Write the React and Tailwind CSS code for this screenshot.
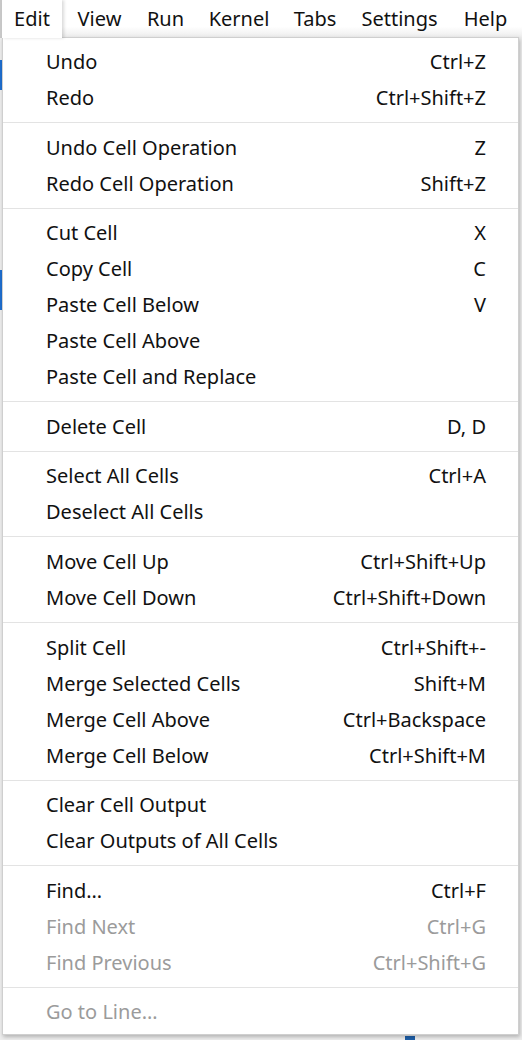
import React from "react";

const F = { fontFamily: "'Noto Sans', 'Open Sans', sans-serif" };

const groups = [
  [["Undo", "Ctrl+Z"], ["Redo", "Ctrl+Shift+Z"]],
  [["Undo Cell Operation", "Z"], ["Redo Cell Operation", "Shift+Z"]],
  [["Cut Cell", "X"], ["Copy Cell", "C"], ["Paste Cell Below", "V"], ["Paste Cell Above", ""], ["Paste Cell and Replace", ""]],
  [["Delete Cell", "D, D"]],
  [["Select All Cells", "Ctrl+A"], ["Deselect All Cells", ""]],
  [["Move Cell Up", "Ctrl+Shift+Up"], ["Move Cell Down", "Ctrl+Shift+Down"]],
  [["Split Cell", "Ctrl+Shift+-"], ["Merge Selected Cells", "Shift+M"], ["Merge Cell Above", "Ctrl+Backspace"], ["Merge Cell Below", "Ctrl+Shift+M"]],
  [["Clear Cell Output", ""], ["Clear Outputs of All Cells", ""]],
  [["Find…", "Ctrl+F"], ["Find Next", "Ctrl+G", true], ["Find Previous", "Ctrl+Shift+G", true]],
  [["Go to Line…", "", true]],
];

export default function App() {
  return (
    <div className="relative w-[522px] h-[1040px] overflow-hidden bg-[#eeeeee]" style={F}>
      <div className="flex h-[38px] bg-gradient-to-b from-white from-70% to-[#ececec] text-[20px] text-[#111]">
        <div className="w-[2px] bg-[#c8c8c8]" />
        <div className="relative z-10 flex h-[38px] w-[60px] items-center justify-center bg-white shadow-[2px_0_3px_rgba(0,0,0,0.15)]">Edit</div>
        <div className="flex w-[75px] items-center justify-center">View</div>
        <div className="flex w-[57px] items-center justify-center">Run</div>
        <div className="flex w-[90px] items-center justify-center">Kernel</div>
        <div className="flex w-[62px] items-center justify-center">Tabs</div>
        <div className="flex w-[107px] items-center justify-center">Settings</div>
        <div className="flex w-[65px] items-center justify-center">Help</div>
      </div>
      <div className="absolute left-0 top-[60px] h-[30px] w-[2px] bg-[#1e6fd0]" />
      <div className="absolute left-0 top-[270px] h-[40px] w-[2px] bg-[#1e6fd0]" />
      <div className="absolute left-[405px] top-[1036px] h-[6px] w-[10px] bg-[#1e5fa8]" />
      <div className="absolute left-[2px] top-[37px] w-[517px] border border-[#cfcfcf] bg-white pt-[6px] pb-[4px] shadow-[1px_2px_4px_rgba(0,0,0,0.25)] text-[20px]">
        {groups.map((g, gi) => (
          <div key={gi}>
            {gi > 0 && (
              <div className="pt-[6px] pb-[6.6px]">
                <div className="h-px bg-[#e3e3e3]" />
              </div>
            )}
            {g.map(([label, sc, dis]) => (
              <div
                key={label}
                className={`flex h-[36px] items-center justify-between pl-[43px] pr-[32px] ${dis ? "text-[#9b9b9b]" : "text-[#111]"}`}
              >
                <span>{label}</span>
                <span>{sc}</span>
              </div>
            ))}
          </div>
        ))}
      </div>
    </div>
  );
}
